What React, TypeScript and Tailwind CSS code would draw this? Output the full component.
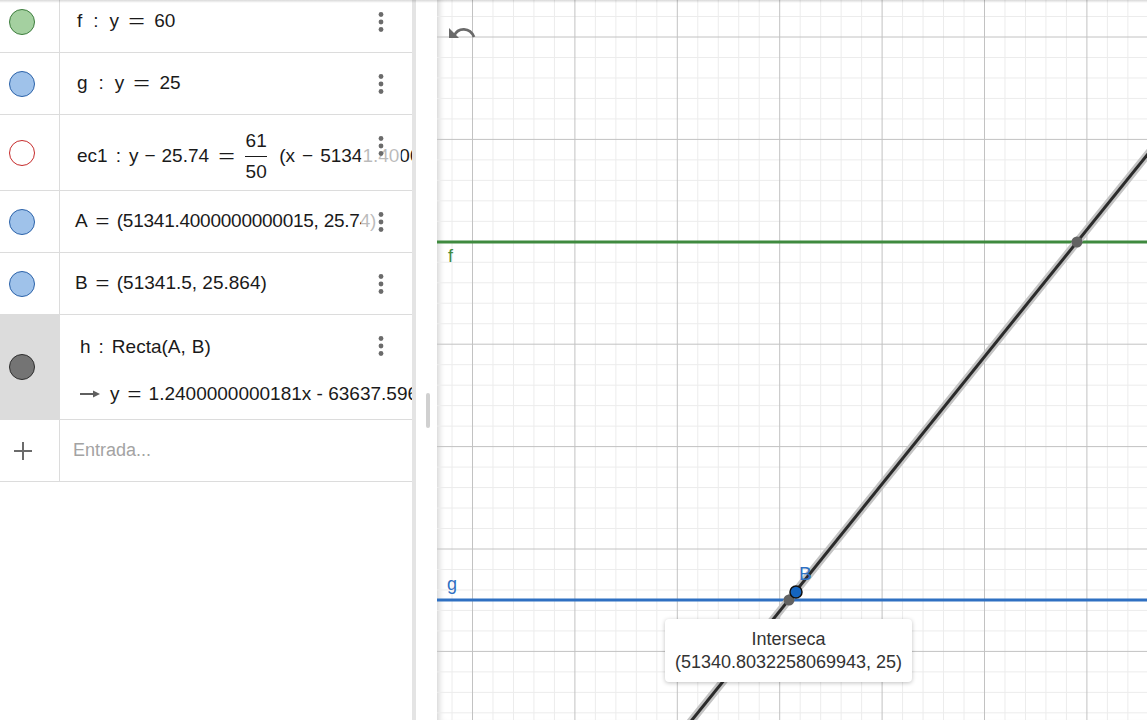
import React from 'react';

const font = "font-['Liberation_Sans',Arial,sans-serif]";

// canvas geometry (px inside the graphics view)
const CW = 710;
const CH = 720;
const X0 = 35.5;
const Y0 = 37;
const MAJ = 102.4;
const MIN = MAJ / 5;

function gridLines(start: number, limit: number) {
  const out: { v: number; major: boolean }[] = [];
  let i = 0;
  for (let v = start - MIN; v < limit; v += MIN, i++) {
    if (v < 0) continue;
    out.push({ v, major: (i - 1) % 5 === 0 });
  }
  return out;
}

const Dots = () => (
  <svg width="6" height="22" viewBox="0 0 6 22" className="fill-[#6b6b6b]">
    <circle cx="3" cy="3.5" r="2.4" />
    <circle cx="3" cy="11" r="2.4" />
    <circle cx="3" cy="18.5" r="2.4" />
  </svg>
);

const Menu = () => (
  <div className="absolute left-[361px] top-[11px] flex h-[40px] w-[40px] items-center justify-center bg-white/70">
    <Dots />
  </div>
);

const Eq = ({ wide = false }: { wide?: boolean }) => (
  <span className={wide ? 'mx-[12px] inline-block scale-x-150' : 'mx-[9px] inline-block scale-x-125'}>=</span>
);

function Row({
  h,
  dot,
  children,
  selected = false,
  menu = true,
}: {
  h: string;
  dot: React.ReactNode;
  children: React.ReactNode;
  selected?: boolean;
  menu?: boolean;
}) {
  return (
    <div className={`relative flex border-b border-[#dcdcdc] ${h}`}>
      <div
        className={`flex w-[60px] shrink-0 items-center border-r border-[#dcdcdc] pl-[9px] ${
          selected ? 'bg-[#dcdcdc]' : ''
        }`}
      >
        {dot}
      </div>
      <div className="flex min-w-0 flex-1 overflow-hidden">{children}</div>
      {menu && <Menu />}
    </div>
  );
}

const Circle = ({ cls }: { cls: string }) => (
  <div className={`h-[26px] w-[26px] rounded-full border ${cls}`} />
);

function AlgebraPanel() {
  return (
    <div className={`w-[412px] shrink-0 overflow-hidden text-[19px] text-[#1a1a1a] ${font}`}>
      <div className="-mt-[9px]">
        <Row h="h-[62px]" dot={<Circle cls="border-[#3d7d3d] bg-[#a4d0a0]" />}>
          <div className="flex items-center whitespace-nowrap pl-[17px]">
            <span>f</span>
            <span className="mx-[11px]">:</span>
            <span>y</span>
            <Eq wide />
            <span>60</span>
          </div>
        </Row>
        <Row h="h-[62px]" dot={<Circle cls="border-[#2b62a9] bg-[#9fc2ea]" />}>
          <div className="flex items-center whitespace-nowrap pl-[17px]">
            <span>g</span>
            <span className="mx-[11px]">:</span>
            <span>y</span>
            <Eq wide />
            <span>25</span>
          </div>
        </Row>
        <Row h="h-[76px]" dot={<Circle cls="border-[#c62b2b] bg-white" />}>
          <div className="flex items-center whitespace-nowrap pl-[17px] pt-[8px]">
            <span>ec1</span>
            <span className="mx-[8px]">:</span>
            <span>y</span>
            <span className="mx-[6px]">−</span>
            <span>25.74</span>
            <Eq wide />
            <span className="ml-[1px] flex flex-col items-center leading-[30px]">
              <span>61</span>
              <span className="h-px w-[22px] bg-[#1a1a1a]" />
              <span>50</span>
            </span>
            <span className="ml-[12px]">(x</span>
            <span className="mx-[7px]">−</span>
            <span>51341.400000000015)</span>
          </div>
        </Row>
        <Row h="h-[62px]" dot={<Circle cls="border-[#2b62a9] bg-[#9fc2ea]" />}>
          <div className="flex items-center whitespace-nowrap pl-[15px]">
            <span>A</span>
            <Eq />
            <span className="tracking-[-0.25px]">(51341.4000000000015, 25.74)</span>
          </div>
        </Row>
        <Row h="h-[62px]" dot={<Circle cls="border-[#2b62a9] bg-[#9fc2ea]" />}>
          <div className="flex items-center whitespace-nowrap pl-[15px]">
            <span>B</span>
            <Eq />
            <span>(51341.5, 25.864)</span>
          </div>
        </Row>
        <Row h="h-[105px]" selected dot={<Circle cls="border-[#2e2e2e] bg-[#747474]" />}>
          <div className="flex flex-col whitespace-nowrap pl-[20px] pt-[18px] leading-[28px]">
            <div className="flex">
              <span>h</span>
              <span className="mx-[8px]">:</span>
              <span>Recta(A,</span>
              <span className="ml-[6px]">B)</span>
            </div>
            <div className="mt-[19px] flex items-center">
              <svg width="20" height="10" viewBox="0 0 20 10" className="mr-[10px]">
                <line x1="0" y1="5" x2="14" y2="5" stroke="#5f5f5f" strokeWidth="2" />
                <path d="M13 1.5 L20 5 L13 8.5 Z" fill="#5f5f5f" />
              </svg>
              <span>y</span>
              <Eq />
              <span>1.2400000000181x - 63637.59600000093</span>
            </div>
          </div>
        </Row>
        <div className="flex h-[62px] border-b border-[#dcdcdc]">
          <div className="flex w-[60px] shrink-0 items-center justify-center border-r border-[#dcdcdc] pr-[16px] pl-[2px]">
            <svg width="20" height="20" viewBox="0 0 20 20">
              <path d="M10 1 V19 M1 10 H19" stroke="#6b6b6b" strokeWidth="2" />
            </svg>
          </div>
          <div className="flex items-center pl-[13px] text-[18px] text-[#a3a3a3]">Entrada...</div>
        </div>
      </div>
    </div>
  );
}

function Graphics() {
  const vx = gridLines(X0, CW);
  const hy = gridLines(Y0, CH);
  return (
    <div className="relative h-[720px] flex-1 overflow-hidden bg-white shadow-[inset_7px_0_6px_-5px_rgba(0,0,0,0.18)]">
      <svg width={CW} height={CH} viewBox={`0 0 ${CW} ${CH}`} className="block">
        {vx.filter((l) => !l.major).map((l) => (
          <line key={`vm${l.v}`} x1={l.v} y1={0} x2={l.v} y2={CH} stroke="#ececec" strokeWidth="1" />
        ))}
        {hy.filter((l) => !l.major).map((l) => (
          <line key={`hm${l.v}`} x1={0} y1={l.v} x2={CW} y2={l.v} stroke="#ececec" strokeWidth="1" />
        ))}
        {vx.filter((l) => l.major).map((l) => (
          <line key={`vM${l.v}`} x1={l.v} y1={0} x2={l.v} y2={CH} stroke="#c2c2c2" strokeWidth="1" />
        ))}
        {hy.filter((l) => l.major).map((l) => (
          <line key={`hM${l.v}`} x1={0} y1={l.v} x2={CW} y2={l.v} stroke="#c2c2c2" strokeWidth="1" />
        ))}

        {/* f and g */}
        <line x1="0" y1="242" x2={CW} y2="242" stroke="#3f8a3f" strokeWidth="3" />
        <line x1="0" y1="600" x2={CW} y2="600" stroke="#2f70c2" strokeWidth="3" />

        {/* h, selected */}
        <line x1="230" y1="751" x2="760" y2="93" stroke="#c4c4c4" strokeWidth="8" strokeLinecap="round" />
        <line x1="230" y1="751" x2="760" y2="93" stroke="#2b2b2b" strokeWidth="3" />

        <circle cx="640" cy="242" r="5.5" fill="#626262" />
        <circle cx="352" cy="600" r="5.5" fill="#626262" />
        <circle cx="359" cy="592" r="6" fill="#1565c0" stroke="#111" strokeWidth="1.5" />

        {/* undo */}
        <path d="M17 36 C21 27 33 27 37 37" fill="none" stroke="#6a6a6a" strokeWidth="2.8" />
        <path d="M12 28 L12 38 L22 38 Z" fill="#6a6a6a" />
      </svg>

      <span className={`absolute left-[11px] top-[243px] text-[18px] text-[#3f8a3f] ${font}`}>f</span>
      <span className={`absolute left-[10px] top-[571px] text-[18px] text-[#2f70c2] ${font}`}>g</span>
      <span className={`absolute left-[362px] top-[560px] text-[19px] text-[#2f70c2] ${font}`}>B</span>

      <div
        className={`absolute left-[228px] top-[619px] flex h-[63px] w-[247px] flex-col items-center justify-center rounded-[4px] bg-white text-[18px] leading-[23px] text-[#333] shadow-[0_1px_4px_rgba(0,0,0,0.25)] ${font}`}
      >
        <span>Interseca</span>
        <span>(51340.8032258069943, 25)</span>
      </div>
    </div>
  );
}

export default function App() {
  return (
    <div className="relative flex h-[720px] w-[1147px] overflow-hidden bg-white">
      <AlgebraPanel />
      <div className="w-[4px] shrink-0 bg-[#e4e4e4]" />
      <div className="flex w-[21px] shrink-0 justify-center pt-[393px]">
        <div className="ml-[2px] h-[35px] w-[4px] rounded-full bg-[#d0d0d0]" />
      </div>
      <Graphics />
      <div className="pointer-events-none absolute inset-x-0 top-0 h-[3px] bg-gradient-to-b from-black/15 to-transparent" />
    </div>
  );
}
